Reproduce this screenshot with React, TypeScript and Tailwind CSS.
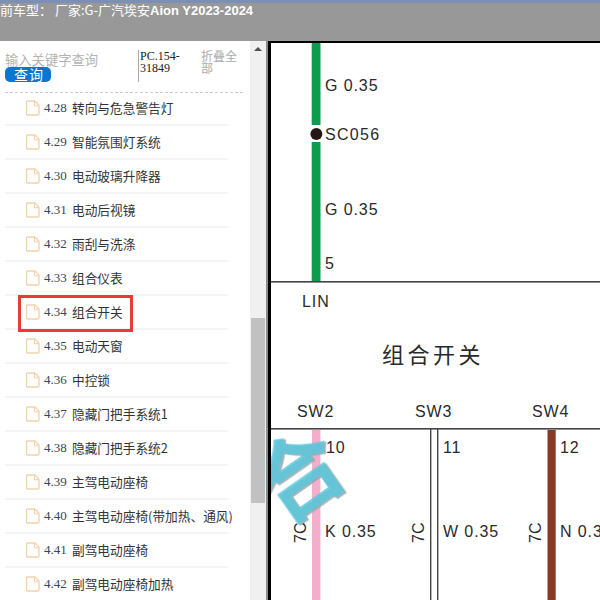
const rows = [
  ["4.28", "转向与危急警告灯"],
  ["4.29", "智能氛围灯系统"],
  ["4.30", "电动玻璃升降器"],
  ["4.31", "电动后视镜"],
  ["4.32", "雨刮与洗涤"],
  ["4.33", "组合仪表"],
  ["4.34", "组合开关"],
  ["4.35", "电动天窗"],
  ["4.36", "中控锁"],
  ["4.37", "隐藏门把手系统1"],
  ["4.38", "隐藏门把手系统2"],
  ["4.39", "主驾电动座椅"],
  ["4.40", "主驾电动座椅(带加热、通风)"],
  ["4.41", "副驾电动座椅"],
  ["4.42", "副驾电动座椅加热"],
];

const cjk = "font-['Noto_Sans_CJK_SC','Noto_Sans',sans-serif]";

function FileIcon() {
  return (
    <svg width="14" height="16" viewBox="0 0 14 16" className="shrink-0" fill="none">
      <path d="M1.5 1h7.5l4 4.2V14a1 1 0 0 1-1 1h-10.500a1 1 0 0 1-1-1V2a1 1 0 0 1 1-1z" fill="#fffdfa" stroke="#f2d3ac" strokeWidth="1.3" />
      <path d="M8.500 1v4.700h4.500" stroke="#f2d3ac" strokeWidth="1.100" />
    </svg>
  );
}

function Row({ num, name, active }: { num: string; name: string; active: boolean }) {
  return (
    <div className="relative h-[34px] ml-[5px] w-[223px] border-b-2 border-[#f5f5f5] flex items-center pl-[21px] gap-[4px] whitespace-nowrap">
      <FileIcon />
      <span className="font-['Liberation_Serif',serif] text-[13px] text-[#33475b] w-[24px] shrink-0">{num}</span>
      <span className={`${cjk} text-[12.700px] text-[#333]`}>{name}</span>
      {active && <div className="absolute left-[13px] top-[-1px] w-[115px] h-[37px] border-[3px] border-[#e63a3c]" />}
    </div>
  );
}

function Diagram() {
  const sans = "'Liberation Sans',sans-serif";
  const t = { fontFamily: sans, fontSize: 16, fill: "#2a2a2a", letterSpacing: 0.9 };
  return (
    <svg className="block w-[329px] h-[557px]" viewBox="271 43 329 557">
      <rect x="271" y="42" width="329" height="558" fill="#fff" />
      <rect x="311.700" y="42" width="8.800" height="239" fill="#0f9b4d" />
      <rect x="311" y="125" width="10" height="17" fill="#fff" />
      <circle cx="316.400" cy="134" r="6" fill="#231815" />
      <text x="325" y="91" {...t}>G 0.35</text>
      <text x="325" y="140" {...t} letterSpacing={1.300}>SC056</text>
      <text x="325" y="215" {...t}>G 0.35</text>
      <text x="325" y="269" {...t} letterSpacing={0}>5</text>
      <rect x="271" y="281" width="329" height="1.600" fill="#444" />
      <text x="302" y="307" {...t}>LIN</text>
      <text x="382" y="363" fontFamily="'Noto Sans CJK SC',sans-serif" fontSize="22" fill="#2a2a2a" letterSpacing="3.500">组合开关</text>
      <text x="297" y="417" {...t}>SW2</text>
      <text x="415" y="417" {...t}>SW3</text>
      <text x="532" y="417" {...t}>SW4</text>
      <rect x="271" y="428" width="329" height="1.600" fill="#444" />
      <rect x="312" y="430" width="8.400" height="170" fill="#f3aecb" />
      <rect x="430" y="429" width="1.400" height="171" fill="#444" />
      <rect x="437" y="429" width="1.400" height="171" fill="#444" />
      <rect x="547.500" y="430" width="8.200" height="170" fill="#873a25" />
      <text transform="translate(280 527) rotate(-35)" fontFamily="'Noto Sans CJK SC',sans-serif" fontWeight="700" fontSize="88" fill="#5cc8de" fillOpacity="0.85" className="drop-shadow-[1px_2px_0_#9aa5a8]">合</text>
      <text x="326" y="453" {...t}>10</text>
      <text x="443" y="453" {...t}>11</text>
      <text x="560" y="453" {...t}>12</text>
      <text transform="translate(306 543) rotate(-90)" {...t} letterSpacing={0}>7C</text>
      <text transform="translate(424 543) rotate(-90)" {...t} letterSpacing={0}>7C</text>
      <text transform="translate(541 543) rotate(-90)" {...t} letterSpacing={0}>7C</text>
      <text x="325" y="537" {...t}>K 0.35</text>
      <text x="443" y="537" {...t}>W 0.35</text>
      <text x="560" y="537" {...t}>N 0.35</text>
    </svg>
  );
}

export default function App() {
  return (
    <div className="w-[600px] h-[600px] overflow-hidden flex flex-col bg-white">
      <div className="h-[41px] shrink-0 bg-[#989898] border-t-[3px] border-[#7d8fb5] overflow-hidden">
        <div className={`${cjk} text-[13px] leading-[14px] text-white whitespace-nowrap`}>
          前车型： 厂家:G-广汽埃安<span className="font-['Liberation_Sans',sans-serif] font-bold text-[13px]">Aion Y2023-2024</span>
        </div>
      </div>
      <div className="flex flex-1 min-h-0">
        <div className="w-[250px] shrink-0 overflow-hidden">
          <div className="h-[52px] flex items-stretch mx-[5px] border-b border-dashed border-[#ccc] w-[238px] pt-[9px] pb-[10px]">
            <div className="w-[133px] shrink-0 pt-[3px]">
              <div className={`${cjk} text-[13.300px] leading-[14px] text-[#b3b3b3]`}>输入关键字查询</div>
              <div className={`${cjk} w-[46px] h-[15px] rounded-[5px] bg-[#0a76cf] text-white text-[14px] tracking-[1px] leading-[15px] text-center pl-[2px]`}>查询</div>
            </div>
            <div className="w-[63px] shrink-0 border-l border-[#aaa] pl-px font-['Liberation_Serif',serif] text-[12px] leading-[12px] text-[#222] break-all">PC.154-<br />31849</div>
            <div className={`${cjk} w-[38px] text-[12px] leading-[12px] text-[#aaa]`}>折叠全部</div>
          </div>
          <div className="-mt-px">
            {rows.map(([n, name]) => (
              <Row key={n} num={n} name={name} active={n === "4.34"} />
            ))}
          </div>
        </div>
        <div className="w-[16px] shrink-0 bg-[#f0f0f0] flex flex-col">
          <div className="h-[277px] flex justify-center pt-[6px]">
            <div className="w-0 h-0 border-x-[4px] border-x-transparent border-b-[4px] border-b-[#505050]" />
          </div>
          <div className="w-[14px] ml-px h-[185px] bg-[#c1c1c1]" />
        </div>
        <div className="w-[2px] shrink-0 bg-[#8a8a8a]" />
        <div className="flex-1 min-w-0 border-l-[3px] border-t-2 border-black overflow-hidden">
          <Diagram />
        </div>
      </div>
    </div>
  );
}
